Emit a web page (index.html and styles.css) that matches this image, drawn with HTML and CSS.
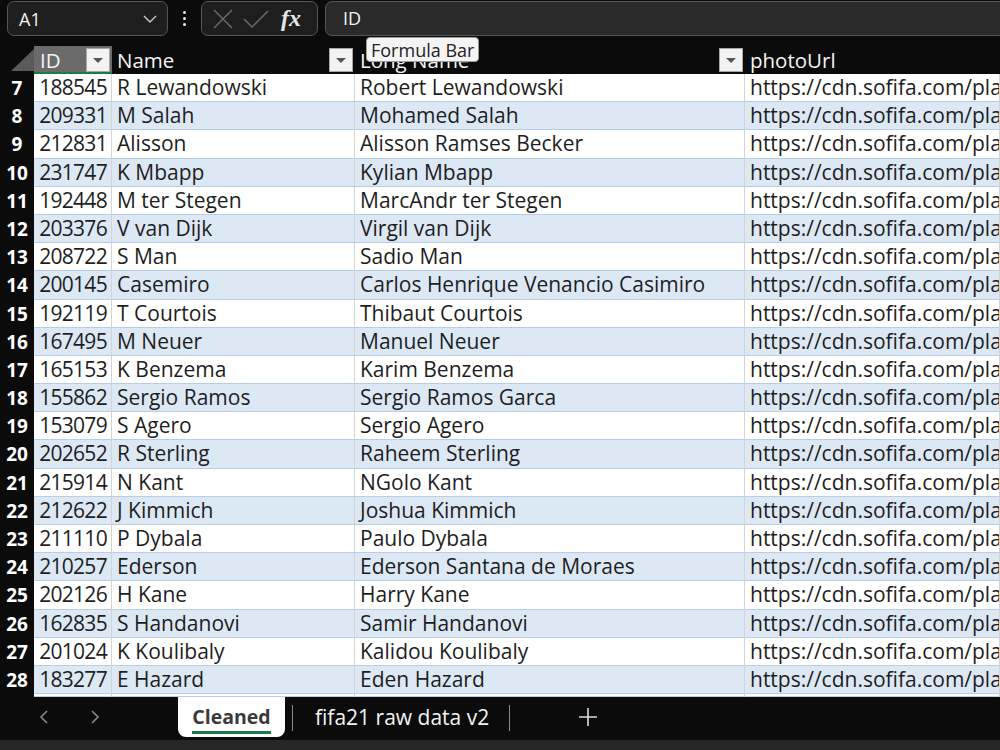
FILE: index.html
```html
<!DOCTYPE html>
<html lang="en">
<head>
    <meta charset="UTF-8">
    <title>fifa21 - Cleaned</title>
    <link rel="stylesheet" href="styles.css">
</head>
<body>
    <div class="topbar">
        <div class="name-box">
            <span>A1</span>
            <svg class="chev" width="14" height="8" viewBox="0 0 14 8"><path d="M1 1 L7 7 L13 1" fill="none" stroke="#c8c8c8" stroke-width="1.4"/></svg>
        </div>
        <div class="dots"><i></i><i></i><i></i></div>
        <div class="fx-box">
            <svg width="22" height="22" viewBox="0 0 22 22"><path d="M2 2 L20 20 M20 2 L2 20" stroke="#6a6a6a" stroke-width="1.5"/></svg>
            <svg width="26" height="22" viewBox="0 0 26 22"><path d="M1 11 L9 19 L25 3" fill="none" stroke="#6a6a6a" stroke-width="1.5"/></svg>
            <span class="fx">fx</span>
        </div>
        <div class="formula">ID</div>
    </div>

    <div class="sheet">
        <div class="row head">
            <div class="rn corner"><svg width="23" height="22" viewBox="0 0 23 22"><polygon points="23,0 23,22 0,22" fill="#5a5a5a"/></svg></div>
            <div class="hc sel">ID<span class="filter"></span></div>
            <div class="hc">Name<span class="filter"></span></div>
            <div class="hc">Long Name<span class="filter"></span></div>
            <div class="hc">photoUrl</div>
        </div>

        <div class="row"><div class="rn">7</div><div class="c num">188545</div><div class="c">R Lewandowski</div><div class="c">Robert Lewandowski</div><div class="c">https://cdn.sofifa.com/players/</div></div>
        <div class="row alt"><div class="rn">8</div><div class="c num">209331</div><div class="c">M Salah</div><div class="c">Mohamed Salah</div><div class="c">https://cdn.sofifa.com/players/</div></div>
        <div class="row"><div class="rn">9</div><div class="c num">212831</div><div class="c">Alisson</div><div class="c">Alisson Ramses Becker</div><div class="c">https://cdn.sofifa.com/players/</div></div>
        <div class="row alt"><div class="rn">10</div><div class="c num">231747</div><div class="c">K Mbapp</div><div class="c">Kylian Mbapp</div><div class="c">https://cdn.sofifa.com/players/</div></div>
        <div class="row"><div class="rn">11</div><div class="c num">192448</div><div class="c">M ter Stegen</div><div class="c">MarcAndr ter Stegen</div><div class="c">https://cdn.sofifa.com/players/</div></div>
        <div class="row alt"><div class="rn">12</div><div class="c num">203376</div><div class="c">V van Dijk</div><div class="c">Virgil van Dijk</div><div class="c">https://cdn.sofifa.com/players/</div></div>
        <div class="row"><div class="rn">13</div><div class="c num">208722</div><div class="c">S Man</div><div class="c">Sadio Man</div><div class="c">https://cdn.sofifa.com/players/</div></div>
        <div class="row alt"><div class="rn">14</div><div class="c num">200145</div><div class="c">Casemiro</div><div class="c">Carlos Henrique Venancio Casimiro</div><div class="c">https://cdn.sofifa.com/players/</div></div>
        <div class="row"><div class="rn">15</div><div class="c num">192119</div><div class="c">T Courtois</div><div class="c">Thibaut Courtois</div><div class="c">https://cdn.sofifa.com/players/</div></div>
        <div class="row alt"><div class="rn">16</div><div class="c num">167495</div><div class="c">M Neuer</div><div class="c">Manuel Neuer</div><div class="c">https://cdn.sofifa.com/players/</div></div>
        <div class="row"><div class="rn">17</div><div class="c num">165153</div><div class="c">K Benzema</div><div class="c">Karim Benzema</div><div class="c">https://cdn.sofifa.com/players/</div></div>
        <div class="row alt"><div class="rn">18</div><div class="c num">155862</div><div class="c">Sergio Ramos</div><div class="c">Sergio Ramos Garca</div><div class="c">https://cdn.sofifa.com/players/</div></div>
        <div class="row"><div class="rn">19</div><div class="c num">153079</div><div class="c">S Agero</div><div class="c">Sergio Agero</div><div class="c">https://cdn.sofifa.com/players/</div></div>
        <div class="row alt"><div class="rn">20</div><div class="c num">202652</div><div class="c">R Sterling</div><div class="c">Raheem Sterling</div><div class="c">https://cdn.sofifa.com/players/</div></div>
        <div class="row"><div class="rn">21</div><div class="c num">215914</div><div class="c">N Kant</div><div class="c">NGolo Kant</div><div class="c">https://cdn.sofifa.com/players/</div></div>
        <div class="row alt"><div class="rn">22</div><div class="c num">212622</div><div class="c">J Kimmich</div><div class="c">Joshua Kimmich</div><div class="c">https://cdn.sofifa.com/players/</div></div>
        <div class="row"><div class="rn">23</div><div class="c num">211110</div><div class="c">P Dybala</div><div class="c">Paulo Dybala</div><div class="c">https://cdn.sofifa.com/players/</div></div>
        <div class="row alt"><div class="rn">24</div><div class="c num">210257</div><div class="c">Ederson</div><div class="c">Ederson Santana de Moraes</div><div class="c">https://cdn.sofifa.com/players/</div></div>
        <div class="row"><div class="rn">25</div><div class="c num">202126</div><div class="c">H Kane</div><div class="c">Harry Kane</div><div class="c">https://cdn.sofifa.com/players/</div></div>
        <div class="row alt"><div class="rn">26</div><div class="c num">162835</div><div class="c">S Handanovi</div><div class="c">Samir Handanovi</div><div class="c">https://cdn.sofifa.com/players/</div></div>
        <div class="row"><div class="rn">27</div><div class="c num">201024</div><div class="c">K Koulibaly</div><div class="c">Kalidou Koulibaly</div><div class="c">https://cdn.sofifa.com/players/</div></div>
        <div class="row alt"><div class="rn">28</div><div class="c num">183277</div><div class="c">E Hazard</div><div class="c">Eden Hazard</div><div class="c">https://cdn.sofifa.com/players/</div></div>
        <div class="row peek"><div class="rn"></div><div class="c"></div><div class="c"></div><div class="c"></div><div class="c"></div></div>

        <div class="tooltip">Formula Bar</div>
    </div>

    <div class="tabbar">
        <span class="nav first"><svg width="10" height="16" viewBox="0 0 10 16"><path d="M8 2 L2 8 L8 14" fill="none" stroke="#8a8a8a" stroke-width="1.6"/></svg></span>
        <span class="nav"><svg width="10" height="16" viewBox="0 0 10 16"><path d="M2 2 L8 8 L2 14" fill="none" stroke="#8a8a8a" stroke-width="1.6"/></svg></span>
        <div class="tab active"><span>Cleaned</span></div>
        <i class="sep"></i>
        <div class="tab">fifa21 raw data v2</div>
        <i class="sep"></i>
        <svg class="plus" width="18" height="18" viewBox="0 0 18 18"><path d="M9 0 V18 M0 9 H18" stroke="#dcdcdc" stroke-width="1.6"/></svg>
    </div>
    <div class="status"></div>
</body>
</html>
```

FILE: styles.css
```css
body {
    margin: 0;
    width: 1000px;
    height: 750px;
    overflow: hidden;
    background: #0b0b0b;
    font-family: "Open Sans", Lato, sans-serif;
}

/* formula bar */
.topbar {
    display: flex;
    align-items: center;
    height: 37px;
    padding-left: 7px;
    box-sizing: border-box;
}
.name-box {
    width: 161px;
    height: 35px;
    box-sizing: border-box;
    border: 1px solid #555;
    border-radius: 7px;
    background: #1e1e1e;
    display: flex;
    align-items: center;
    justify-content: space-between;
    padding: 0 10px 0 11px;
    color: #f2f2f2;
    font-size: 18px;
}
.dots {
    width: 33px;
    display: flex;
    flex-direction: column;
    align-items: center;
    gap: 3px;
}
.dots i {
    width: 3px;
    height: 3px;
    background: #e8e8e8;
    border-radius: 50%;
}
.fx-box {
    width: 117px;
    height: 35px;
    box-sizing: border-box;
    border: 1px solid #555;
    border-radius: 7px;
    background: #1e1e1e;
    display: flex;
    align-items: center;
    gap: 9px;
    padding-left: 10px;
}
.fx {
    font-family: "Liberation Serif", serif;
    font-style: italic;
    font-weight: bold;
    font-size: 24px;
    color: #e6e6e6;
    margin-left: 3px;
}
.formula {
    flex: 1;
    margin-left: 7px;
    margin-right: -20px;
    height: 35px;
    box-sizing: border-box;
    border: 1px solid #555;
    border-radius: 7px;
    background: #2a2a2a;
    color: #f2f2f2;
    font-size: 18px;
    line-height: 33px;
    padding-left: 17px;
}

/* grid */
.sheet {
    position: relative;
    margin-top: 9px;
}
.row {
    display: grid;
    grid-template-columns: 34px 78px 243px 390px 1fr;
    height: 28.2px;
    background: #fff;
    white-space: nowrap;
}
.row.alt {
    background: #dde8f5;
}
.row.head {
    height: 28px;
    background: #0b0b0b;
}
.row.peek {
    height: 3px;
}
.rn {
    background: #0b0b0b;
    color: #fff;
    font-weight: bold;
    font-size: 19px;
    text-align: center;
    line-height: 28px;
}
.corner {
    display: flex;
    justify-content: flex-end;
    align-items: flex-end;
    padding-bottom: 3px;
}
.c {
    box-sizing: border-box;
    border-right: 1px solid #d4d4d4;
    border-bottom: 1px solid #b8cde6;
    padding: 0 5px;
    font-size: 21px;
    line-height: 27px;
    color: #1e1e1e;
    overflow: hidden;
}
.c.num {
    text-align: right;
    padding-right: 4px;
    padding-left: 0;
    letter-spacing: -0.7px;
}
.hc {
    position: relative;
    color: #f4f4f4;
    font-size: 20.5px;
    line-height: 28px;
    padding-left: 5px;
    overflow: hidden;
}
.hc.sel {
    background: #6b6b6b;
    box-shadow: inset 0 -2px 0 #1e7a45;
    padding-left: 6px;
}
.filter {
    position: absolute;
    right: 2px;
    top: 2px;
    width: 24px;
    height: 24px;
    box-sizing: border-box;
    background: #f3f3f3;
    border: 1px solid #a8a8a8;
}
.filter::after {
    content: "";
    position: absolute;
    left: 6px;
    top: 9px;
    border-left: 5px solid transparent;
    border-right: 5px solid transparent;
    border-top: 5px solid #555;
}
.tooltip {
    position: absolute;
    left: 366px;
    top: -9px;
    padding: 0 4px;
    height: 25px;
    line-height: 24px;
    background: #f4f4f4;
    border: 1px solid #9a9a9a;
    border-radius: 4px;
    color: #222;
    font-size: 18px;
    box-sizing: border-box;
}

/* sheet tabs */
.tabbar {
    height: 43px;
    display: flex;
    align-items: flex-start;
    color: #f2f2f2;
    font-size: 21px;
}
.nav {
    width: 30px;
    height: 40px;
    display: flex;
    align-items: center;
    justify-content: center;
    margin-left: 21px;
}
.nav.first {
    margin-left: 29px;
}
.tab {
    height: 40px;
    line-height: 40px;
    margin: 0 13px 0 22px;
}
.tab.active {
    margin: 0 0 0 68px;
    width: 107px;
    text-align: center;
    background: #fff;
    color: #3a3a3a;
    font-weight: bold;
    font-size: 19.5px;
    border-radius: 0 0 8px 8px;
}
.tab.active span {
    display: inline-block;
    line-height: 28px;
    margin-top: 4px;
    border-bottom: 3px solid #1e7a45;
}
.sep {
    width: 1px;
    height: 26px;
    margin: 8px 0 0 7px;
    background: #8a8a8a;
}
.plus {
    margin: 11px 0 0 69px;
}
.status {
    height: 10px;
    background: #262626;
}
```
